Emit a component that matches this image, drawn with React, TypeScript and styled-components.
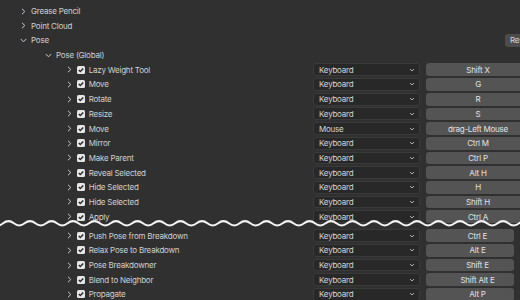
import React from 'react'
import styled, { createGlobalStyle } from 'styled-components'

const GlobalStyle = createGlobalStyle`
    html, body {
        margin : 0;
        padding : 0;
        background : #303030;
        overflow : hidden;
    }
    body {
        font-family : Inter, "Noto Sans", sans-serif;
        font-size : 8px;
        letter-spacing : -0.22px;
        color : #d2d2d2;
    }
`

interface Item {
    name: string
    device: string
    keys: string
}

const upper: Item[] = [
    { name: 'Lazy Weight Tool', device: 'Keyboard', keys: 'Shift X' },
    { name: 'Move', device: 'Keyboard', keys: 'G' },
    { name: 'Rotate', device: 'Keyboard', keys: 'R' },
    { name: 'Resize', device: 'Keyboard', keys: 'S' },
    { name: 'Move', device: 'Mouse', keys: 'drag-Left Mouse' },
    { name: 'Mirror', device: 'Keyboard', keys: 'Ctrl M' },
    { name: 'Make Parent', device: 'Keyboard', keys: 'Ctrl P' },
    { name: 'Reveal Selected', device: 'Keyboard', keys: 'Alt H' },
    { name: 'Hide Selected', device: 'Keyboard', keys: 'H' },
    { name: 'Hide Selected', device: 'Keyboard', keys: 'Shift H' },
    { name: 'Apply', device: 'Keyboard', keys: 'Ctrl A' },
]

const lower: Item[] = [
    { name: 'Push Pose from Breakdown', device: 'Keyboard', keys: 'Ctrl E' },
    { name: 'Relax Pose to Breakdown', device: 'Keyboard', keys: 'Alt E' },
    { name: 'Pose Breakdowner', device: 'Keyboard', keys: 'Shift E' },
    { name: 'Blend to Neighbor', device: 'Keyboard', keys: 'Shift Alt E' },
    { name: 'Propagate', device: 'Keyboard', keys: 'Alt P' },
]

const Chevron = ({ open }: { open?: boolean }) => (
    <svg width="7" height="7" viewBox="0 0 7 7">
        {open
            ? <polyline points="0.8,2 3.5,4.8 6.2,2" fill="none" stroke="#c8c8c8" strokeWidth="1" />
            : <polyline points="2,0.8 4.8,3.5 2,6.2" fill="none" stroke="#c8c8c8" strokeWidth="1" />}
    </svg>
)

const Check = () => (
    <CheckBox>
        <svg width="8" height="8" viewBox="0 0 8 8">
            <polyline points="1.8,4.1 3.3,5.6 6.3,2.4" fill="none" stroke="#2a2a2a" strokeWidth="1.4" />
        </svg>
    </CheckBox>
)

const DownArrow = () => (
    <svg width="6" height="4" viewBox="0 0 6 4">
        <polyline points="1,1 3,3 5,1" fill="none" stroke="#bdbdbd" strokeWidth="0.9" />
    </svg>
)

const KeymapRow = ({ item, short }: { item: Item, short?: boolean }) => (
    <Row $indent={66}>
        <Toggle><Chevron /></Toggle>
        <Check />
        <Label>{item.name}</Label>
        <Dropdown>
            <span>{item.device}</span>
            <DownArrow />
        </Dropdown>
        <KeyButton $short={short}>{item.keys}</KeyButton>
    </Row>
)

const App = () => {
    return (
        <>
            <GlobalStyle />
            <Panel>
                <Row $indent={20}>
                    <Toggle><Chevron /></Toggle>
                    <Label>{'Grease Pencil'}</Label>
                </Row>
                <Row $indent={20}>
                    <Toggle><Chevron /></Toggle>
                    <Label>{'Point Cloud'}</Label>
                </Row>
                <Row $indent={20}>
                    <Toggle><Chevron open /></Toggle>
                    <Label>{'Pose'}</Label>
                    <RestoreButton>{'Restore'}</RestoreButton>
                </Row>
                <Row $indent={45}>
                    <Toggle><Chevron open /></Toggle>
                    <Label>{'Pose (Global)'}</Label>
                </Row>
                {upper.map((it, i) => <KeymapRow key={`u_${i}`} item={it} />)}
                <Break>
                    <svg width="520" height="10" viewBox="0 0 520 10">
                        <path d={wavePath(true)} fill="#303030" />
                        <path d={wavePath(false)} fill="none" stroke="#f4f4f4" strokeWidth="2" />
                    </svg>
                </Break>
                {lower.map((it, i) => <KeymapRow key={`l_${i}`} item={it} short />)}
            </Panel>
        </>
    )
}

// wave line across the cut, period 21.5px
const wavePath = (filled: boolean) => {
    const mid = 3.3
    const amp = 2.2
    const period = 21.5
    const start = 8.5 - period * 0.25 - period
    let d = `M${start} ${mid}`
    let x = start
    let up = true
    while (x < 540) {
        const half = period / 2
        const cy = up ? mid - amp * 2 : mid + amp * 2
        d += ` Q${(x + half / 2).toFixed(2)} ${cy.toFixed(2)} ${(x + half).toFixed(2)} ${mid}`
        x += half
        up = !up
    }
    if (filled) d += ` L${x.toFixed(2)} 8.3 L${start} 8.3 Z`
    return d
}

const Panel = styled.div`
    width : 520px;
    height : 300px;
    padding-top : 3.7px;
    display : flex;
    flex-direction : column;
    box-sizing : border-box;
    overflow : hidden;
`

const Row = styled.div<{ $indent: number }>`
    display : flex;
    align-items : center;
    height : 14.7px;
    flex-shrink : 0;
    padding-left : ${props => props.$indent}px;
    white-space : nowrap;
`

const Toggle = styled.div`
    width : 11px;
    display : flex;
    align-items : center;
    svg {
        margin-left : -0.5px;
    }
`

const CheckBox = styled.div`
    width : 8px;
    height : 8px;
    border-radius : 1.5px;
    background : #e6e6e6;
    margin-right : 3.7px;
    display : flex;
`

const Label = styled.div`
    flex : 1;
    color : #d0d0d0;
    line-height : 1;
`

const Dropdown = styled.div`
    width : 107px;
    height : 12.8px;
    box-sizing : border-box;
    background : #282828;
    border : 1px solid #3a3a3a;
    border-radius : 3px;
    display : flex;
    align-items : center;
    justify-content : space-between;
    padding : 0 4px 0 5px;
    color : #d4d4d4;
    margin-right : 6px;
`

const KeyButton = styled.div<{ $short?: boolean }>`
    width : ${props => props.$short ? '88px' : '104px'};
    margin-right : ${props => props.$short ? '6px' : '-10px'};
    padding-left : ${props => props.$short ? '15px' : '0'};
    height : 12.7px;
    box-sizing : border-box;
    background : #545454;
    border-radius : 3px;
    color : #e2e2e2;
    display : flex;
    align-items : center;
    justify-content : center;
`

const RestoreButton = styled.div`
    width : 49px;
    height : 12.5px;
    box-sizing : border-box;
    margin-right : -34px;
    background : #4c4c4c;
    border-radius : 3px;
    color : #d8d8d8;
    display : flex;
    align-items : center;
    padding-left : 5px;
`

const Break = styled.div`
    height : 4.3px;
    flex-shrink : 0;
    position : relative;
    svg {
        position : absolute;
        left : 0;
        top : -4px;
    }
`

export default App
